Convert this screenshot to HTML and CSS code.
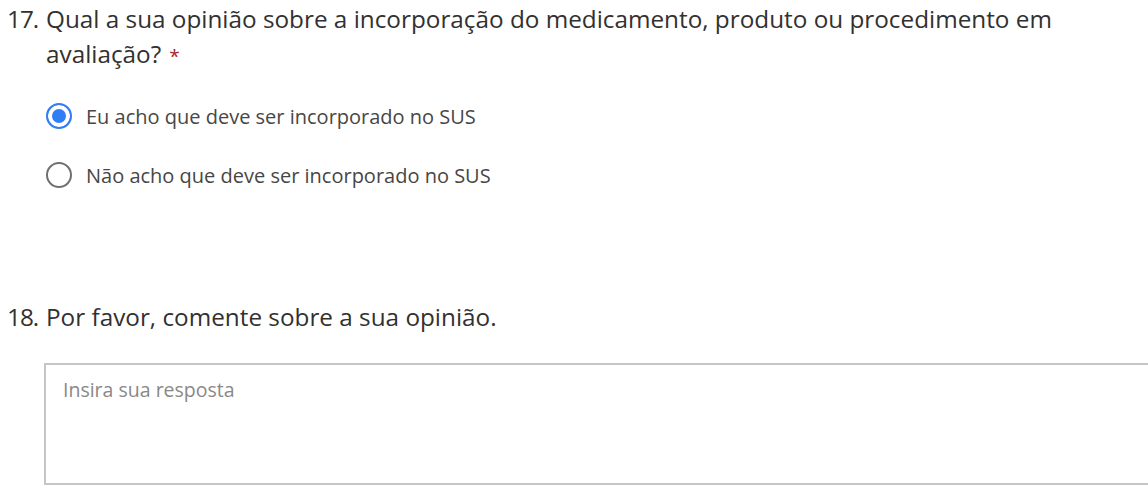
FILE: index.html
```html
<!DOCTYPE html>
<html lang="pt">
  <head>
    <meta charset="UTF-8" />
    <meta name="viewport" content="width=device-width, initial-scale=1.0" />
    <title>Formulário</title>
    <link rel="stylesheet" href="styles.css">
  </head>
  <body>
    <!-- pergunta 17 -->
    <div class="question">
      <div class="question-head">
        <span class="question-num">17.</span>
        <div class="question-title"><span>Qual a sua opinião sobre a incorporação do medicamento, produto ou procedimento em avaliação?</span><span class="required">*</span></div>
      </div>
      <ul class="choice-list">
        <li class="choice-item">
          <span class="radio checked"></span>
          <span class="choice-text">Eu acho que deve ser incorporado no SUS</span>
        </li>
        <li class="choice-item">
          <span class="radio"></span>
          <span class="choice-text">Não acho que deve ser incorporado no SUS</span>
        </li>
      </ul>
    </div>
    <!-- pergunta 18 -->
    <div class="question question-text">
      <div class="question-head">
        <span class="question-num">18.</span>
        <div class="question-title">Por favor, comente sobre a sua opinião.</div>
      </div>
      <div class="answer-box">Insira sua resposta</div>
    </div>
  </body>
</html>
```

FILE: styles.css
```css
/*global*/
* {
  margin: 0;
  padding: 0;
  box-sizing: border-box;
}

body {
  width: 1148px;
  height: 490px;
  overflow: hidden;
  padding-top: 1px;
  background-color: #fff;
  font-family: "Open Sans", "Noto Sans", sans-serif;
  color: #323130;
}

/*question*/
.question-head {
  display: flex;
  font-size: 24.3px;
  line-height: 35px;
}

.question-num {
  width: 46px;
  padding-left: 7px;
  flex-shrink: 0;
  letter-spacing: -1px;
}

.question-title {
  width: 1060px;
}

.required {
  color: #a4262c;
  margin-left: 8px;
  font-size: 19px;
  line-height: 1;
}

/*choices*/
.choice-list {
  list-style: none;
  margin-top: 32px;
  padding-left: 46px;
}

.choice-item {
  display: flex;
  align-items: center;
  gap: 14px;
  height: 26px;
  margin-bottom: 33px;
  font-size: 20px;
  color: #484644;
}

.choice-item:last-child {
  margin-bottom: 0;
}

.radio {
  width: 26px;
  height: 26px;
  border: 2px solid #707070;
  border-radius: 50%;
  flex-shrink: 0;
}

.radio.checked {
  border-color: #317df6;
  background-color: #317df6;
  box-shadow: inset 0 0 0 4px #fff;
}

/*text answer*/
.question-text {
  margin-top: 111px;
}

.answer-box {
  width: 1130px;
  height: 122px;
  margin: 29px 0 0 44px;
  border: 2px solid #c8c6c4;
  padding: 11px 17px;
  font-size: 19.5px;
  color: #8a8886;
}
```
